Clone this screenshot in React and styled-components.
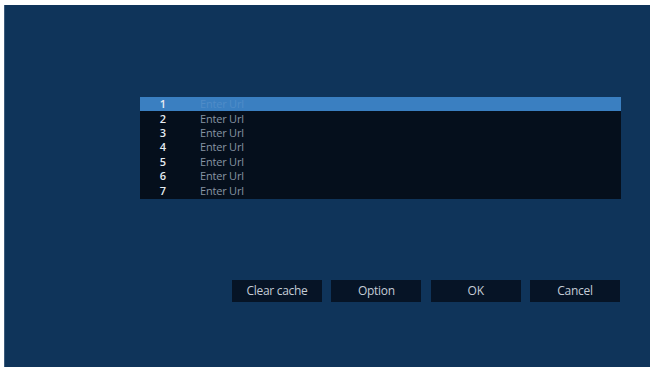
import React from 'react'
import styled, { createGlobalStyle } from 'styled-components'

const Global = createGlobalStyle`
  html, body {
    margin: 0;
    padding: 0;
    background: #ffffff;
    overflow: hidden;
  }
  body {
    font-family: "Open Sans", "Liberation Sans", sans-serif;
  }
`

const Screen = styled.div`
  margin: 5px 4px 0 4px;
  height: 362px;
  background: #0f345a;
  border-left: 1px solid #3c5b7c;
  box-sizing: border-box;
  display: flex;
  flex-direction: column;
  padding: 92px 29px 0 135px;
`

const List = styled.div`
  display: flex;
  flex-direction: column;
  background: #050f1c;
  width: 481px;
  padding-bottom: 1px;
`

const Row = styled.div`
  display: flex;
  align-items: center;
  height: 14.4px;
  background: ${p => (p.active ? '#3a7fc1' : 'transparent')};
  font-size: 11px;
  line-height: 14px;
`

const Num = styled.span`
  width: 60px;
  text-align: right;
  padding-right: 34px;
  box-sizing: border-box;
  color: #e6ecf2;
  font-weight: 600;
`

const Url = styled.span`
  color: ${p => (p.active ? '#4f8cc8' : '#8794a3')};
  letter-spacing: -0.2px;
`

const Buttons = styled.div`
  display: flex;
  gap: 9.33px;
  margin-top: 81px;
  margin-left: 92px;
`

const Button = styled.div`
  width: 90px;
  height: 22px;
  background: #061426;
  color: #c4ccd6;
  font-size: 12px;
  letter-spacing: -0.3px;
  display: flex;
  align-items: center;
  justify-content: center;
`

const rows = [1, 2, 3, 4, 5, 6, 7]

export default function App() {
  return (
    <>
      <Global />
      <Screen>
        <List>
          {rows.map(n => (
            <Row key={n} active={n === 1}>
              <Num>{n}</Num>
              <Url active={n === 1}>Enter Url</Url>
            </Row>
          ))}
        </List>
        <Buttons>
          <Button>Clear cache</Button>
          <Button>Option</Button>
          <Button>OK</Button>
          <Button>Cancel</Button>
        </Buttons>
      </Screen>
    </>
  )
}
